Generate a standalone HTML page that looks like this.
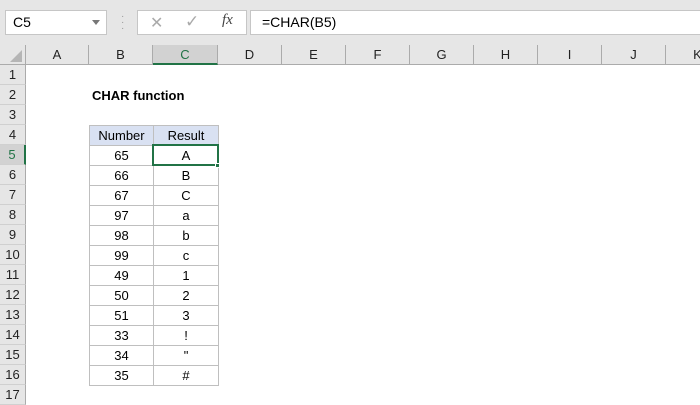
<!DOCTYPE html>
<html><head><style>
*{margin:0;padding:0;box-sizing:border-box}
body{width:700px;height:400px;overflow:hidden;background:#fff;font-family:"Liberation Sans",sans-serif;font-size:13px;color:#000;position:relative}
.a{position:absolute}
.top{left:0;top:0;width:700px;height:45px;background:#e6e6e6}
.box{background:#fff;border:1px solid #c6c6c6}
.ch{top:45px;height:20px;border-right:1px solid #ababab;border-bottom:1px solid #ababab;text-align:center;line-height:19px;color:#222;background:#e6e6e6}
.rh{left:0;width:26px;height:20px;border-bottom:1px solid #d0d0d0;border-right:1px solid #ababab;text-align:center;line-height:20px;background:#e6e6e6;color:#222}
.c{height:20px;border:1px solid #bfbfbf;text-align:center;line-height:19px;padding:0}
</style></head><body>
<div class="a top"></div>
<div class="a box" style="left:5px;top:10px;width:102px;height:25px;line-height:23px;padding-left:7px;font-size:14px">C5</div>
<div class="a" style="left:92px;top:20px;width:0;height:0;border-left:4px solid transparent;border-right:4px solid transparent;border-top:5px solid #777"></div>
<div class="a" style="left:121px;top:14px;color:#999;line-height:6px;font-size:10px">·<br>·<br>·</div>
<div class="a box" style="left:137px;top:10px;width:110px;height:25px"></div>
<div class="a" style="left:150px;top:13px;color:#aaa;font-size:16px">✕</div>
<div class="a" style="left:185px;top:12px;color:#aaa;font-size:17px">✓</div>
<div class="a" style="left:222px;top:12px;color:#444;font-family:'Liberation Serif',serif;font-style:italic;font-size:15px">fx</div>
<div class="a box" style="left:250px;top:10px;width:460px;height:25px;line-height:23px;padding-left:11px;font-size:14px">=CHAR(B5)</div>

<div class="a ch" style="left:0;width:26px"></div>
<div class="a" style="left:10px;top:50px;width:0;height:0;border-left:12px solid transparent;border-bottom:12px solid #b5b5b5"></div>
<div class="a ch" style="left:26px;width:63px">A</div>
<div class="a ch" style="left:89px;width:64px">B</div>
<div class="a ch" style="left:153px;width:65px;background:#d2d2d2;color:#217346;border-bottom:2px solid #217346">C</div>
<div class="a ch" style="left:218px;width:64px">D</div>
<div class="a ch" style="left:282px;width:64px">E</div>
<div class="a ch" style="left:346px;width:64px">F</div>
<div class="a ch" style="left:410px;width:64px">G</div>
<div class="a ch" style="left:474px;width:64px">H</div>
<div class="a ch" style="left:538px;width:64px">I</div>
<div class="a ch" style="left:602px;width:64px">J</div>
<div class="a ch" style="left:666px;width:64px">K</div>

<div class="a rh" style="top:65px">1</div>
<div class="a rh" style="top:85px">2</div>
<div class="a rh" style="top:105px">3</div>
<div class="a rh" style="top:125px">4</div>
<div class="a rh" style="top:145px;background:#d2d2d2;color:#217346;border-right:2px solid #217346">5</div>
<div class="a rh" style="top:165px">6</div>
<div class="a rh" style="top:185px">7</div>
<div class="a rh" style="top:205px">8</div>
<div class="a rh" style="top:225px">9</div>
<div class="a rh" style="top:245px">10</div>
<div class="a rh" style="top:265px">11</div>
<div class="a rh" style="top:285px">12</div>
<div class="a rh" style="top:305px">13</div>
<div class="a rh" style="top:325px">14</div>
<div class="a rh" style="top:345px">15</div>
<div class="a rh" style="top:365px">16</div>
<div class="a rh" style="top:385px">17</div>

<div class="a" style="left:92px;top:88px;font-weight:bold;font-size:13px">CHAR function</div>

<div class="a" style="left:89px;top:125px">
<table style="border-collapse:collapse;font-size:13px;table-layout:fixed;width:129px">
<colgroup><col style="width:64px"><col style="width:65px"></colgroup>
<tr style="background:#d9e1f2"><td class="c">Number</td><td class="c">Result</td></tr>
<tr><td class="c">65</td><td class="c">A</td></tr>
<tr><td class="c">66</td><td class="c">B</td></tr>
<tr><td class="c">67</td><td class="c">C</td></tr>
<tr><td class="c">97</td><td class="c">a</td></tr>
<tr><td class="c">98</td><td class="c">b</td></tr>
<tr><td class="c">99</td><td class="c">c</td></tr>
<tr><td class="c">49</td><td class="c">1</td></tr>
<tr><td class="c">50</td><td class="c">2</td></tr>
<tr><td class="c">51</td><td class="c">3</td></tr>
<tr><td class="c">33</td><td class="c">!</td></tr>
<tr><td class="c">34</td><td class="c">"</td></tr>
<tr><td class="c">35</td><td class="c">#</td></tr>
</table></div>
<div class="a" style="left:152px;top:144px;width:67px;height:22px;border:2px solid #217346"></div>
<div class="a" style="left:215px;top:163px;width:5px;height:5px;background:#217346;border:1px solid #fff"></div>
</body></html>
